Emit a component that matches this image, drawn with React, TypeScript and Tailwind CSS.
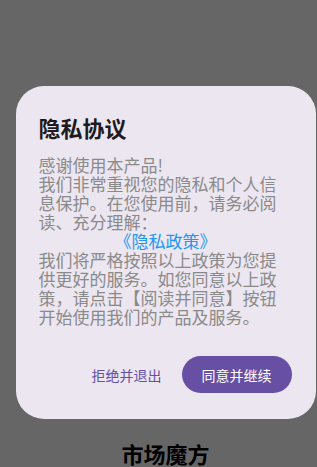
import React from "react";

export default function App() {
  return (
    <div
      className="w-[317px] h-[467px] overflow-hidden bg-[#666666]"
      style={{ fontFamily: '"Noto Sans CJK SC", "Noto Sans", sans-serif' }}
    >
      <div className="w-[331px] flex flex-col items-center pt-[86px]">
        <div className="w-[300px] rounded-[28px] bg-[#ECE6F0] pl-[23px] pr-[23px] pt-[27px] pb-[26px] flex flex-col">
          <div className="text-[22px] leading-[28px] font-bold text-[#1d1b20]">隐私协议</div>
          <div className="mt-[14px] text-[17px] leading-[19px] text-[#8a8a8a]">
            <div>感谢使用本产品!</div>
            <div>我们非常重视您的隐私和个人信</div>
            <div>息保护。在您使用前，请务必阅</div>
            <div>读、充分理解：</div>
            <div className="text-center text-[#2196F3]">《隐私政策》</div>
            <div>我们将严格按照以上政策为您提</div>
            <div>供更好的服务。如您同意以上政</div>
            <div>策，请点击【阅读并同意】按钮</div>
            <div>开始使用我们的产品及服务。</div>
          </div>
          <div className="mt-[30px] flex items-center justify-end">
            <button className="text-[14px] text-[#6750A4] mr-[20px] leading-[20px]">拒绝并退出</button>
            <button className="w-[110px] h-[37px] rounded-full bg-[#6750A4] text-white text-[14px] leading-[20px] mr-[1px]">
              同意并继续
            </button>
          </div>
        </div>
        <div className="mt-[20px] text-[22px] leading-[28px] font-bold text-black">市场魔方</div>
      </div>
    </div>
  );
}
